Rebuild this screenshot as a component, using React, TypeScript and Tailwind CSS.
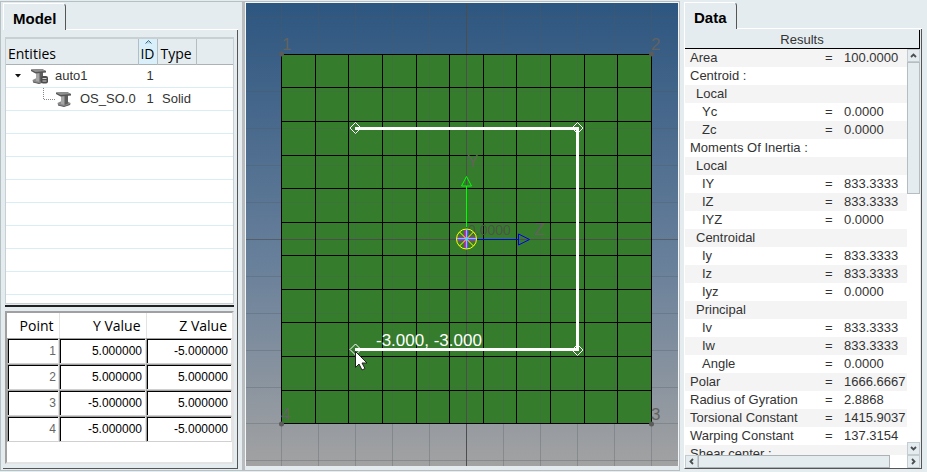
const tree = [
  { name: 'auto1', id: '1', type: '', child: false },
  { name: 'OS_SO.0', id: '1', type: 'Solid', child: true },
];

const points = [
  ['1', '5.000000', '-5.000000'],
  ['2', '5.000000', '5.000000'],
  ['3', '-5.000000', '5.000000'],
  ['4', '-5.000000', '-5.000000'],
];

const results = [
  { label: 'Area', value: '100.0000', level: 0 },
  { label: 'Centroid :', value: '', level: 0 },
  { label: 'Local', value: '', level: 1 },
  { label: 'Yc', value: '0.0000', level: 2 },
  { label: 'Zc', value: '0.0000', level: 2 },
  { label: 'Moments Of Inertia :', value: '', level: 0 },
  { label: 'Local', value: '', level: 1 },
  { label: 'IY', value: '833.3333', level: 2 },
  { label: 'IZ', value: '833.3333', level: 2 },
  { label: 'IYZ', value: '0.0000', level: 2 },
  { label: 'Centroidal', value: '', level: 1 },
  { label: 'Iy', value: '833.3333', level: 2 },
  { label: 'Iz', value: '833.3333', level: 2 },
  { label: 'Iyz', value: '0.0000', level: 2 },
  { label: 'Principal', value: '', level: 1 },
  { label: 'Iv', value: '833.3333', level: 2 },
  { label: 'Iw', value: '833.3333', level: 2 },
  { label: 'Angle', value: '0.0000', level: 2 },
  { label: 'Polar', value: '1666.6667', level: 0 },
  { label: 'Radius of Gyration', value: '2.8868', level: 0 },
  { label: 'Torsional Constant', value: '1415.9037', level: 0 },
  { label: 'Warping Constant', value: '137.3154', level: 0 },
  { label: 'Shear center :', value: '', level: 0 },
];

const indent = ['pl-[5px]', 'pl-[11px]', 'pl-[17px]'];

// mesh lines, in canvas units
const meshX = [35, 69, 102, 136, 170, 203, 237, 270, 304, 338, 371, 405];
const meshY = [51, 84, 118, 152, 185, 219, 252, 286, 319, 353, 387, 420];
const gridX = [35, 72, 109, 146, 183, 257, 294, 331, 368, 405];
const gridY = [14, 51, 88, 125, 162, 199, 273, 310, 347, 384, 420, 457];

function BeamIcon({ locked }: { locked?: boolean }) {
  return (
    <svg width="18" height="16" viewBox="0 0 18 16" className="shrink-0">
      <path d="M1.500 12l3-1.500h7l3 1.500v1.500L8 15.500l-6-1.500z" fill="#8a8a8a" />
      <path d="M2 13.500l6 1.500 6-2v1L8 16l-6-1.500z" fill="#5c5c5c" />
      <path d="M5 4h4v10l-4-1z" fill="#a6a6a6" />
      <path d="M8.500 4H12v8.500L8.500 14z" fill="#5e5e5e" />
      <path d="M0 1.500L11 1l4 2v1.500L4.500 5.500 0 3z" fill="#555" />
      <path d="M0 1.500L11 1l4 2L4.500 4z" fill="#8f8f8f" />
      {locked && (
        <g>
          <rect x="10" y="8" width="7" height="7.500" rx="2" fill="#4c4c4c" />
          <path d="M11.500 10.500h4M11.500 13h4" stroke="#d0d0d0" />
        </g>
      )}
    </svg>
  );
}

function Tab({ title }: { title: string }) {
  return (
    <div className="flex">
      <button
        role="tab"
        aria-selected="true"
        className="h-[27px] rounded-tr-sm border-t border-l border-r border-t-white border-l-white border-r-[#555] px-[9px] pt-1 text-[15px] leading-5 font-bold text-black"
      >
        {title}
      </button>
      <div className="flex-1 border-b border-white" />
    </div>
  );
}

function Arrow({ d, label }: { d: string; label: string }) {
  return (
    <button aria-label={label} className="flex size-[13px] shrink-0 items-center justify-center border border-[#c3cdd1] bg-[#e4ecef]">
      <svg width="7" height="7" viewBox="0 0 7 7">
        <path d={d} fill="none" stroke="#4b4f52" strokeWidth="1.800" />
      </svg>
    </button>
  );
}

function ModelPanel() {
  return (
    <section className="flex w-[242px] shrink-0 flex-col border-t border-b border-l border-[#b5c0c4] pt-px pr-1 pb-px pl-[2px]">
      <Tab title="Model" />
      <div className="flex min-h-0 flex-1 flex-col border-r border-b border-[#555] pt-[7px] pr-[3px] pb-1 pl-[2px]">
        <div className="flex h-[267px] shrink-0 flex-col overflow-hidden border border-t-2 border-[#c9d0d3] bg-white">
          <table className="w-full table-fixed border-collapse text-[13px] text-[#333]">
            <colgroup>
              <col className="w-[132px]" />
              <col className="w-[19px]" />
              <col className="w-[39px]" />
              <col />
            </colgroup>
            <thead>
              <tr className="h-[25px] border-b border-[#aab2b6] bg-[#e4ecef] text-left font-['Open_Sans',sans-serif] text-[14px] text-black">
                <th className="border-r border-[#b5bdc1] pt-[5px] pl-[2px] leading-[18px] font-normal">Entities</th>
                <th className="relative border-r border-[#b5bdc1] bg-[#d9f0fa] pt-[5px] text-center leading-[18px] font-normal">
                  ID
                  <svg width="7" height="4" viewBox="0 0 7 4" className="absolute top-px left-[6px]">
                    <path d="M0.500 3.500l3-3 3 3" fill="#b5d3e4" stroke="#456f8a" />
                  </svg>
                </th>
                <th className="border-r border-[#b5bdc1] pt-[5px] pl-[3px] leading-[18px] font-normal">Type</th>
                <th />
              </tr>
            </thead>
            <tbody>
              {tree.map((row) => (
                <tr key={row.name} className="h-[23px] border-b border-[#d9edf5]">
                  <td className="p-0">
                    {row.child ? (
                      <div className="flex items-center pl-[37px]">
                        <svg width="13" height="22" viewBox="0 0 13 22">
                          <path d="M.5 0v11.500h12" fill="none" stroke="#888" strokeDasharray="1 1" />
                        </svg>
                        <BeamIcon />
                        <span className="pl-[6px]">{row.name}</span>
                      </div>
                    ) : (
                      <div className="flex items-center pl-[9px]">
                        <svg width="6" height="4" viewBox="0 0 6 4" className="mr-[10px]">
                          <path d="M0 0h6L3 3.500z" fill="#111" />
                        </svg>
                        <BeamIcon locked />
                        <span className="pl-[6px]">{row.name}</span>
                      </div>
                    )}
                  </td>
                  <td className="py-0 pr-0 pl-[5px] text-center">{row.id}</td>
                  <td className="p-0 pl-[5px]">{row.type}</td>
                  <td />
                </tr>
              ))}
              {Array.from({ length: 8 }, (_, i) => (
                <tr key={i} className="h-[23px] border-b border-[#d9edf5]">
                  <td colSpan={4} />
                </tr>
              ))}
            </tbody>
          </table>
        </div>
        <div className="mt-px mb-1 h-[2px] shrink-0 bg-[#222]" />
        <div className="flex-1 border-2 border-t-[#a0a0a0] border-r-[#e3e3e3] border-b-[#e3e3e3] border-l-[#a0a0a0] bg-white">
          <table className="w-full table-fixed border-collapse">
            <colgroup>
              <col className="w-[52px]" />
              <col className="w-[87px]" />
              <col />
            </colgroup>
            <thead>
              <tr className="h-[25px] text-right font-['Open_Sans',sans-serif] text-[14px] text-black">
                <th className="border-r border-[#e3e3e3] pr-[5px] leading-5 font-normal">Point</th>
                <th className="border-r border-[#e3e3e3] pr-[5px] leading-5 font-normal">Y Value</th>
                <th className="pr-[5px] leading-5 font-normal">Z Value</th>
              </tr>
            </thead>
            <tbody>
              {points.map((row) => (
                <tr key={row[0]} className="h-[26px]">
                  {row.map((value, i) => (
                    <td key={i} className="p-0">
                      <input
                        aria-label={['Point', 'Y Value', 'Z Value'][i] + ' ' + row[0]}
                        defaultValue={value}
                        readOnly={i === 0}
                        className={
                          'block h-[26px] w-full border border-t-[#a0a0a0] border-r-[#e3e3e3] border-b-[#d0d0d0] border-l-[#a0a0a0] bg-white text-right text-[12px] leading-5 shadow-[inset_1px_1px_0_#000] outline-none ' +
                          (i === 0 ? 'pr-[2px] text-[#666]' : 'pr-[3px] text-black')
                        }
                      />
                    </td>
                  ))}
                </tr>
              ))}
            </tbody>
          </table>
        </div>
      </div>
    </section>
  );
}

function SectionView() {
  return (
    <main className="flex min-w-0 flex-1 flex-col border-t border-r border-b border-l-[3px] border-[#b9bdbf] pb-1">
      <div className="min-h-0 flex-1 border border-b-0 border-[#f4f7f8] bg-linear-to-b from-[#2d5680] via-[#677f9a] via-55% to-[#a2a2a2]">
        <svg viewBox="0 0 432 463" className="block size-full font-['Liberation_Sans',sans-serif]">
          <rect x="35" y="51" width="370" height="369" fill="#357d2c" />
          <g stroke="#505860" strokeOpacity=".3" shapeRendering="crispEdges">
            {gridX.map((x) => (
              <path key={x} d={`M${x + 0.5} 0V463`} />
            ))}
            {gridY.map((y) => (
              <path key={y} d={`M0 ${y + 0.5}H432`} />
            ))}
          </g>
          <g stroke="#4d4d4d" shapeRendering="crispEdges">
            <path d="M220.500 0V463M35 236.500H405" />
            <path d="M0 236.500H35M405 236.500H432" strokeOpacity=".6" />
          </g>
          <g stroke="#000" shapeRendering="crispEdges">
            {meshX.map((x) => (
              <path key={x} d={`M${x + 0.5} 51V421`} />
            ))}
            {meshY.map((y) => (
              <path key={y} d={`M35 ${y + 0.5}H406`} />
            ))}
          </g>
          <g fill="#5b5b5b">
            <circle cx="35.500" cy="51" r="2.500" />
            <circle cx="405.500" cy="51" r="2.500" />
            <circle cx="35.500" cy="421" r="2.500" />
            <circle cx="405.500" cy="421" r="2.500" />
          </g>
          <g fill="#62625f" fontSize="17">
            <text x="36" y="47">1</text>
            <text x="405" y="47">2</text>
            <text x="405" y="417">3</text>
            <text x="35" y="417">4</text>
            <text x="221" y="164">Y</text>
            <text x="288" y="232">Z</text>
          </g>
          <text x="222" y="232" fontSize="14" fill="#4c5548">0.0000</text>

          {/* open section outline with its nodes */}
          <path d="M109 125.500H331.500V346.500H109" fill="none" stroke="#fff" strokeWidth="3" />
          <g fill="none" stroke="#fff">
            {[[109.5, 125], [331.5, 125], [331.5, 347], [109.5, 346.5]].map(([x, y]) => (
              <path key={`${x} ${y}`} d={`M${x} ${y - 5.5}l5.500 5.500l-5.500 5.500l-5.500 -5.500z`} />
            ))}
          </g>

          {/* local axes */}
          <g fill="none">
            <path d="M220.500 224V183M220.500 173.500l-5 9.500h10z" stroke="#0f0" />
            <path d="M231 236.500H272M272.500 231v11l11-5.500z" stroke="#00e" />
            <path d="M211 236h19M220.500 227v19" stroke="#f0f" strokeWidth="3" />
            <circle cx="220.500" cy="236" r="10" stroke="#ff0" />
            <path d="M213.500 229l14 14M227.500 229l-14 14" stroke="#ff0" />
            <path d="M211 235.500h19M220.500 226v20" stroke="#0ff" />
          </g>

          <text x="130" y="343" fontSize="17" fill="#fff">-3.000, -3.000</text>
          <path d="M109.500 348.500v16l3.500-3.500 3 6 3-1.500-3-5.500h5z" fill="#fff" stroke="#222" />
        </svg>
      </div>
    </main>
  );
}

function DataPanel() {
  return (
    <section className="flex w-[247px] shrink-0 flex-col pt-px pr-[5px] pb-[2px] pl-1">
      <Tab title="Data" />
      <div className="flex min-h-0 flex-1 flex-col border-r border-b border-l border-r-[#555] border-b-[#555] border-l-white pr-px">
        <h2 className="mt-px h-[19px] shrink-0 border-r border-b border-black text-center text-[13px] leading-5 text-[#333]">Results</h2>
        <div className="flex min-h-0 flex-1">
          <div className="min-w-0 flex-1 overflow-hidden bg-white">
            <table className="w-full table-fixed border-collapse text-[13px] leading-[18px] whitespace-nowrap text-[#333]">
              <colgroup>
                <col className="w-[140px]" />
                <col className="w-[19px]" />
                <col />
              </colgroup>
              <tbody>
                {results.map((row, i) => (
                  <tr key={i} className="h-[18px] odd:bg-[#f4f4f4]">
                    <td className={'py-0 pr-0 ' + indent[row.level]}>{row.label}</td>
                    <td className="p-0">{row.value && '='}</td>
                    <td className="p-0">{row.value}</td>
                  </tr>
                ))}
              </tbody>
            </table>
          </div>
          <div className="flex w-[13px] flex-col bg-white">
            <Arrow label="Scroll up" d="M1 5l2.500-2.500L6 5" />
            <div className="h-[132px] border border-[#b5bdc1] bg-[#e4ecef]" />
            <div className="flex-1" />
            <Arrow label="Scroll down" d="M1 2l2.500 2.500L6 2" />
          </div>
        </div>
        <div className="flex h-[13px] shrink-0 bg-white">
          <Arrow label="Scroll left" d="M5 1L2.500 3.500L5 6" />
          <div className="flex-1 border border-[#aab2b6] bg-[#e4ecef]" />
          <div className="w-[17px]" />
          <Arrow label="Scroll right" d="M2 1l2.500 2.500L2 6" />
        </div>
      </div>
    </section>
  );
}

export default function App() {
  return (
    <div className="flex h-screen overflow-hidden bg-[#e4ecef] py-px font-['Liberation_Sans',Arial,sans-serif]">
      <ModelPanel />
      <SectionView />
      <DataPanel />
    </div>
  );
}
